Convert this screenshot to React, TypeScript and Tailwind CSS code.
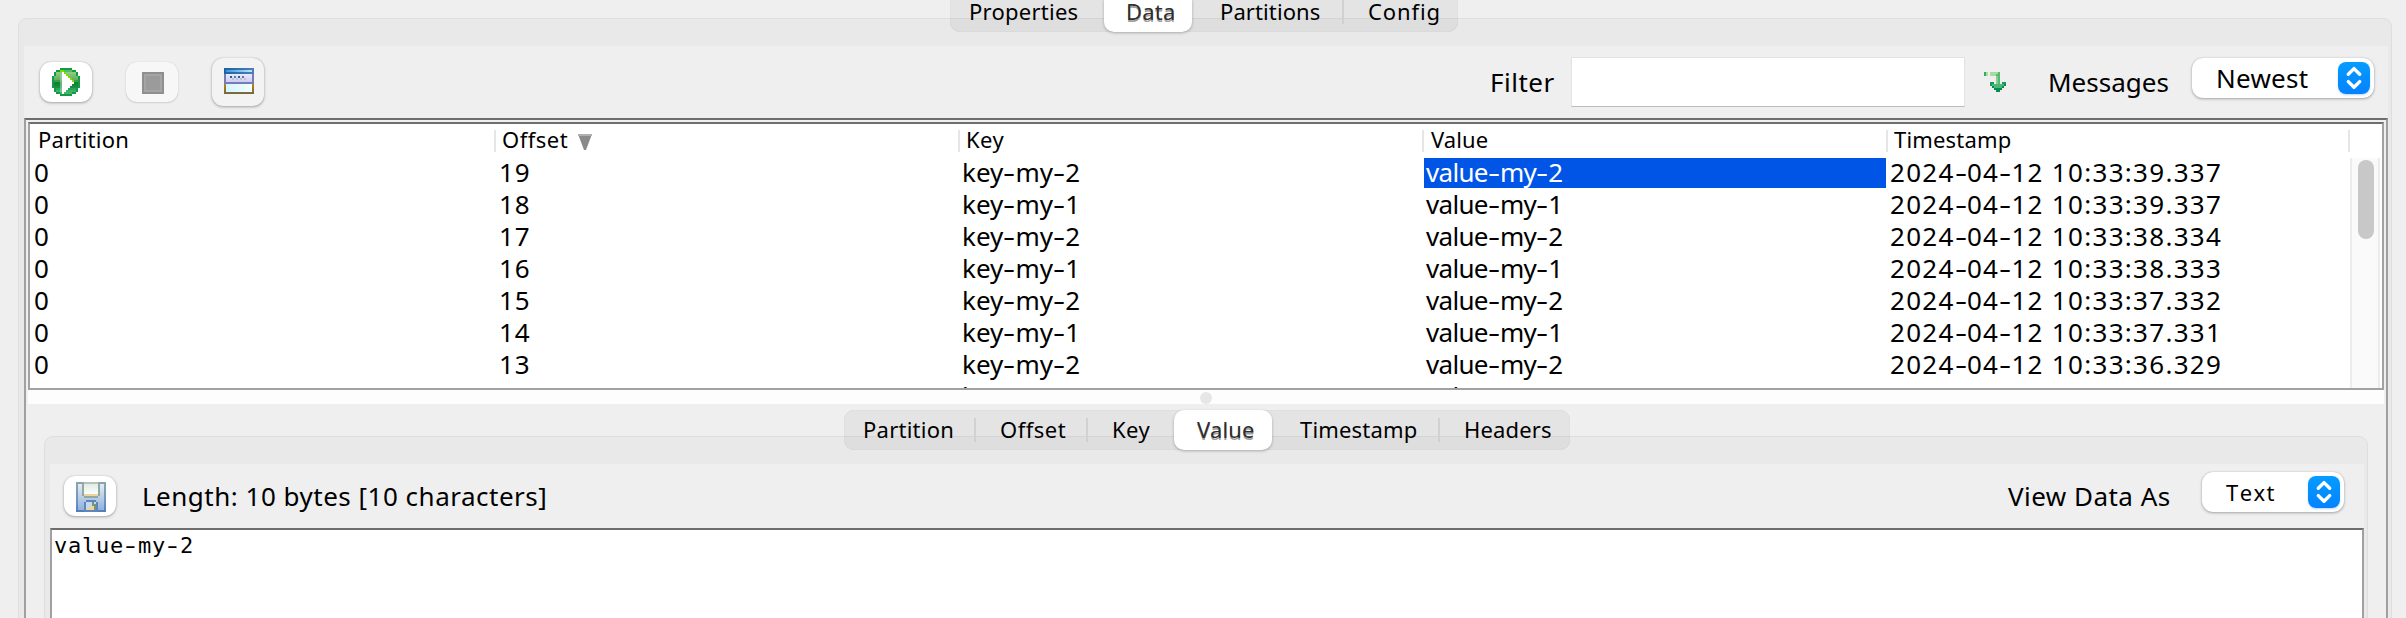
import type { ReactNode } from "react";

type Tab = { label: string; cls: string; active?: boolean; divider?: boolean };

const mainTabs: Tab[] = [
  { label: "Properties", cls: "w-[154px] pl-[19px] tracking-[0.25px]" },
  { label: "Data", cls: "w-[88px] pl-[22px] tracking-[0.2px]", active: true },
  { label: "Partitions", cls: "w-[152px] pl-[28px] tracking-[0.1px]", divider: true },
  { label: "Config", cls: "w-[114px] pl-[24px] tracking-[0.9px]" },
];

const detailTabs: Tab[] = [
  { label: "Partition", cls: "w-[132px] pl-[19px] tracking-[0.24px]", divider: true },
  { label: "Offset", cls: "w-[112px] pl-[24px] tracking-[0.5px]", divider: true },
  { label: "Key", cls: "w-[86px] pl-[24px] tracking-[0.4px]" },
  { label: "Value", cls: "w-[98px] pl-[23px] tracking-[0.16px]", active: true },
  { label: "Timestamp", cls: "w-[168px] pl-[28px] tracking-[0.18px]", divider: true },
  { label: "Headers", cls: "w-[130px] pl-[24px] tracking-[0.15px]" },
];

const messages = [
  { offset: "19", key: "key-my-2", value: "value-my-2", time: "2024-04-12 10:33:39.337" },
  { offset: "18", key: "key-my-1", value: "value-my-1", time: "2024-04-12 10:33:39.337" },
  { offset: "17", key: "key-my-2", value: "value-my-2", time: "2024-04-12 10:33:38.334" },
  { offset: "16", key: "key-my-1", value: "value-my-1", time: "2024-04-12 10:33:38.333" },
  { offset: "15", key: "key-my-2", value: "value-my-2", time: "2024-04-12 10:33:37.332" },
  { offset: "14", key: "key-my-1", value: "value-my-1", time: "2024-04-12 10:33:37.331" },
  { offset: "13", key: "key-my-2", value: "value-my-2", time: "2024-04-12 10:33:36.329" },
  { offset: "12", key: "key-my-1", value: "value-my-1", time: "2024-04-12 10:33:36.328" },
];

const grid = "grid grid-cols-[466px_464px_464px_464px_462px]";

/** Text whose hyphens are drawn wide, as in the system UI face. */
function Dashed({ text, dash = "w-[12.2px] origin-left" }: { text: string; dash?: string }) {
  return (
    <>
      {text.split(/(-)/).map((part, i) =>
        part === "-" ? (
          <span key={i} className={`inline-block scale-x-[1.45] ${dash}`}>
            -
          </span>
        ) : (
          <span key={i}>{part}</span>
        ),
      )}
    </>
  );
}

function TabBar({ tabs, className = "" }: { tabs: Tab[]; className?: string }) {
  return (
    <div className={`relative -mt-[27px] flex h-10 rounded-[10px] bg-black/[0.043] shadow-[inset_0_0_1px_rgba(0,0,0,0.18)] ${className}`}>
      {tabs.map((t) => (
        <div
          key={t.label}
          className={`${t.cls} flex h-10 items-center pb-[2px] text-[22px] leading-[30px] ${
            t.active
              ? "rounded-[10px] bg-white text-[#2e2e2e] shadow-[0_1px_3px_rgba(0,0,0,0.28)] [text-shadow:0_1.5px_0.5px_rgba(0,0,0,0.4)]"
              : ""
          }`}
        >
          {t.label}
          {t.divider && <span className="mt-[2px] ml-auto h-6 w-[2px] bg-[#d1d1d1]" />}
        </div>
      ))}
    </div>
  );
}

function IconButton({ className, children }: { className: string; children: ReactNode }) {
  return (
    <button className={`flex w-[52px] shrink-0 items-center justify-center rounded-[11px] ${className}`}>
      {children}
    </button>
  );
}

const raised = "shadow-[0_0_1px_rgba(0,0,0,0.25),0_1px_3px_rgba(0,0,0,0.3)]";

function Select({ label, className }: { label: string; className: string }) {
  return (
    <div className={`flex h-10 shrink-0 items-center rounded-[11px] bg-white pr-1 leading-10 ${raised} ${className}`}>
      {label}
      <span className="ml-auto flex size-8 items-center justify-center rounded-[8px] bg-linear-to-b from-[#069cff] to-[#0682ff] shadow-[0_1px_2px_rgba(0,120,255,0.3)]">
        <svg width="32" height="32" viewBox="0 0 32 32" fill="none" stroke="#fff" strokeWidth="3.4" strokeLinecap="round" strokeLinejoin="round">
          <path d="M10.3 12.2L16 6.6L21.7 12.2M10.3 19.6L16 25.2L21.7 19.6" />
        </svg>
      </span>
    </div>
  );
}

const discInsets = [4, 2, 1, 1, 0, 0, 0, 0, 0, 0, 1, 1, 2, 4];
const discShades = ["#55b96a", "#8ccb7c", "#80c078", "#74b96c", "#68b060", "#3f9c48", "#07872f", "#0c8a34", "#188f40", "#2aa455", "#40b068", "#45b56c"];

function PlayIcon() {
  return (
    <svg width="28" height="28" viewBox="0 0 14 14" shapeRendering="crispEdges">
      {discInsets.map((n, y) => (
        <rect key={y} x={n} y={y} width={14 - 2 * n} height="1" fill="#129a48" />
      ))}
      {discShades.map((c, y) => {
        const inset = Math.max(discInsets[y + 1] + 1, y === 0 || y === 11 ? 4 : 1);
        return <rect key={y} x={inset} y={y + 1} width={14 - 2 * inset} height="1" fill={c} />;
      })}
      <path d="M4 1h2v1h1v1h1v1h1v1h1v1h1v1h-6v-5h-1z" fill="#7ddc00" />
      <path d="M5 2h1v1h1v1h1v1h1v1h1v1h1v1h-1v1h-1v1h-1v1h-1v1h-1v1h-1z" fill="#fff" />
      <rect x="4" y="3" width="1" height="9" fill="#a9d3ae" opacity="0.6" />
    </svg>
  );
}

function StopIcon() {
  return (
    <svg width="22" height="22" viewBox="0 0 11 11" shapeRendering="crispEdges">
      <path d="M0 0h11v11h-11z" fill="#8f8f8f" />
      <path d="M1 1h9v9h-9z" fill="#a5a5a5" />
      <path d="M2 2h7v7h-7z" fill="#9b9b9b" />
    </svg>
  );
}

function WindowIcon() {
  return (
    <svg width="30" height="26" viewBox="0 0 15 13" shapeRendering="crispEdges">
      <defs>
        <linearGradient id="wt">
          <stop offset="0" stopColor="#2e9ad8" />
          <stop offset="1" stopColor="#c6e2f8" />
        </linearGradient>
        <linearGradient id="wf">
          <stop offset="0" stopColor="#1e62a2" />
          <stop offset="1" stopColor="#4a80bc" />
        </linearGradient>
        <linearGradient id="wl" x2="0" y2="1">
          <stop offset="0" stopColor="#e8ebfa" />
          <stop offset="1" stopColor="#cccdf2" />
        </linearGradient>
        <linearGradient id="wb">
          <stop offset="0" stopColor="#d2f6ff" />
          <stop offset="1" stopColor="#f4feff" />
        </linearGradient>
        <linearGradient id="wo" x2="0" y2="1">
          <stop offset="0" stopColor="#b8831c" />
          <stop offset="1" stopColor="#75683f" />
        </linearGradient>
      </defs>
      <path d="M0 0h15v3h-15z" fill="url(#wf)" />
      <path d="M1 1h13v1h-13z" fill="url(#wt)" />
      <path d="M0 3h15v5h-15z" fill="#777cb4" />
      <path d="M1 3h13v4h-13z" fill="url(#wl)" />
      <path d="M3 4h1v1h-1zM7 4h1v1h-1z" fill="#1c62a4" />
      <path d="M5 4h1v1h-1zM9 4h1v1h-1z" fill="#6478a8" />
      <path d="M4 5h1v1h-1zM6 5h1v1h-1zM8 5h1v1h-1zM10 5h1v1h-1z" fill="#c0c2d4" />
      <path d="M0 8h15v5h-15z" fill="url(#wo)" />
      <path d="M1 8h13v4h-13z" fill="url(#wb)" />
    </svg>
  );
}

function SaveIcon() {
  return (
    <svg width="30" height="30" viewBox="0 0 15 15" shapeRendering="crispEdges">
      <defs>
        <linearGradient id="so" x2="0" y2="1">
          <stop offset="0" stopColor="#8aa6ac" />
          <stop offset="0.6" stopColor="#6e96c4" />
          <stop offset="1" stopColor="#4f7fbc" />
        </linearGradient>
        <linearGradient id="sf" x2="0" y2="1">
          <stop offset="0" stopColor="#e4ecf0" />
          <stop offset="1" stopColor="#92b0dc" />
        </linearGradient>
        <linearGradient id="sl" x2="0" y2="1">
          <stop offset="0" stopColor="#dce8e0" />
          <stop offset="1" stopColor="#fafdff" />
        </linearGradient>
      </defs>
      <path d="M0 0h15v15h-15z" fill="url(#so)" />
      <path d="M1 1h13v13h-13z" fill="url(#sf)" />
      <path d="M3 0h9v7h-1v1h-7v-1h-1z" fill="#93a8a2" />
      <path d="M4 0h7v6h-7z" fill="url(#sl)" />
      <path d="M4 0h7v1h-7z" fill="#b4c4bc" />
      <path d="M4 6h7v1h-7z" fill="#ecd49a" />
      <path d="M5 9h5v1h1v5h-7v-5h1z" fill="#5c86be" />
      <path d="M5 10h5v4h-5z" fill="#c4d8f2" />
      <path d="M8 10h1v1h1v3h-1v-2h-1z" fill="#7d9278" />
      <path d="M7 12h2v2h-2zM5 13h2v1h-2z" fill="#ecd49a" />
    </svg>
  );
}

function ArrowIcon() {
  return (
    <svg className="mt-[26px] ml-[19px] shrink-0" width="22" height="20" viewBox="0 0 11 10" shapeRendering="crispEdges">
      <path d="M0 0h1v2h-1z" fill="#2fae62" />
      <path d="M1 0h1v2h-1zM3 0h4v1h-4zM3 1h3v1h-3z" fill="#a6dc9c" />
      <path d="M7 0h1v6h-1zM6 1h1v1h-1z" fill="#58b878" />
      <path d="M6 2h1v4h-1z" fill="#86d08c" />
      <path d="M3 5h2v1h-2zM3 6h1v1h-1zM9 5h2v1h-2z" fill="#1a9a5c" />
      <path d="M4 6h6v1h-6zM5 7h4v1h-4z" fill="#4cb878" />
      <path d="M10 6h1v1h-1zM4 7h1v1h-1zM9 7h1v1h-1zM5 8h4v1h-4zM6 9h2v1h-2z" fill="#058a52" />
    </svg>
  );
}

function HeaderCell({ children, className }: { children: ReactNode; className: string }) {
  return (
    <div className={`flex text-[22px] leading-[30px] ${className}`}>
      {children}
      <span className="mt-[6px] ml-auto h-[22px] w-[2px] bg-[#e6e6e6]" />
    </div>
  );
}

function MessageTable() {
  return (
    <div className="h-[268px] overflow-hidden border-2 border-[#a2a2a2] border-t-[#6e6e6e] bg-white">
      <div className={`${grid} h-[34px]`}>
        <HeaderCell className="pl-[8px] tracking-[0.24px]">Partition</HeaderCell>
        <HeaderCell className="pl-[6px] tracking-[0.5px]">
          Offset
          <svg className="mt-[10px] ml-[10px]" width="14" height="16" viewBox="0 0 14 16">
            <path d="M0 0H14L8 16H6Z" fill="#8a8a8a" />
            <path d="M0 0H14V2H0Z" fill="#b0b0b0" />
          </svg>
        </HeaderCell>
        <HeaderCell className="pl-[6px] tracking-[0.4px]">Key</HeaderCell>
        <HeaderCell className="pl-[7px] tracking-[0.1px]">Value</HeaderCell>
        <HeaderCell className="pl-[6px] tracking-[0.18px]">Timestamp</HeaderCell>
      </div>
      <div className="flex h-[230px]">
        <div className="w-[2320px]">
          {messages.map((m, i) => (
            <div key={m.offset} className={`${grid} h-8 text-[26px] leading-[28px] whitespace-nowrap`}>
              <div className="pl-[4px]">0</div>
              <div className="pl-[3px] tracking-[1px]">{m.offset}</div>
              <div className="pl-[2px]">
                <Dashed text={m.key} />
              </div>
              <div className={`mr-[2px] h-[30px] pl-[2px] tracking-[-0.7px] ${i === 0 ? "bg-[#0054e6] text-white" : ""}`}>
                <Dashed text={m.value} />
              </div>
              <div className="pl-[2px] tracking-[1.3px]">
                <Dashed text={m.time} />
              </div>
            </div>
          ))}
        </div>
        <div className="w-[30px] border-x-2 border-[#ececec] bg-[#fafafa] pt-[2px] pl-[6px]">
          <div className="h-[79px] w-4 rounded-full bg-[#c8c8c8]" />
        </div>
      </div>
    </div>
  );
}

export default function App() {
  return (
    <div className="h-[618px] w-[2406px] overflow-hidden bg-[#efefef] pt-[18px] pl-[18px] font-['Noto_Sans','Liberation_Sans',sans-serif] text-black">
      <div className="flex h-[620px] w-[2374px] flex-col rounded-[9px] border border-[#dedede] bg-[#e9e9e9] pr-[3px] pl-[5px]">
        <div className="flex h-[27px] shrink-0 justify-center">
          <TabBar tabs={mainTabs} className="mr-[4px]" />
        </div>
        <div className="flex h-[72px] shrink-0 items-start bg-[#efefef] pr-[14px] pl-4">
          <IconButton className={`mt-4 h-10 bg-white ${raised}`}>
            <PlayIcon />
          </IconButton>
          <IconButton className="mt-4 ml-[34px] h-10 bg-[#f7f7f7] pt-[2px] pl-[2px] shadow-[0_0_1px_rgba(0,0,0,0.18),0_1px_2px_rgba(0,0,0,0.12)]">
            <StopIcon />
          </IconButton>
          <IconButton className={`mt-3 ml-[34px] h-12 bg-[#f3f3f3] pb-[2px] pl-[2px] ${raised}`}>
            <WindowIcon />
          </IconButton>
          <span className="mt-[18px] ml-auto w-[81px] text-[26px] leading-9 tracking-[0.5px]">Filter</span>
          <div className="mt-[11px] h-[50px] w-[394px] border border-[#e2e2e2] border-b-[#bcbcbc] bg-white" />
          <ArrowIcon />
          <span className="mt-[18px] ml-[42px] w-[144px] text-[26px] leading-9">Messages</span>
          <Select label="Newest" className="mt-3 w-[182px] pl-[24px] text-[26px] tracking-[0.25px]" />
        </div>
        <div className="flex grow flex-col border-2 border-[#a0a0a0] border-t-[#6e6e6e] bg-[#efefef]">
          <div className="px-[2px] pt-[2px]">
            <MessageTable />
            <div className="flex h-[14px] items-center justify-center bg-[#fdfdfd]">
              <span className="mt-[2px] size-3 rounded-full bg-[#e6e6e6]" />
            </div>
          </div>
          <div className="mt-8 mr-[18px] ml-[18px] flex grow flex-col rounded-t-[9px] border border-[#dedede] bg-[#e9e9e9] pr-[3px] pl-[5px]">
            <div className="flex h-[27px] shrink-0 justify-center">
              <TabBar tabs={detailTabs} />
            </div>
            <div className="flex h-16 shrink-0 items-start bg-[#efefef] pr-5 pl-[14px]">
              <IconButton className={`mt-3 h-10 bg-white pt-[2px] pl-[2px] ${raised}`}>
                <SaveIcon />
              </IconButton>
              <span className="mt-[14px] ml-[26px] text-[26px] leading-9 tracking-[0.5px]">Length: 10 bytes [10 characters]</span>
              <span className="mt-[14px] ml-auto w-[194px] text-[26px] leading-9 tracking-[0.47px]">View Data As</span>
              <Select label="Text" className="mt-2 w-[142px] pl-[24px] text-[22px] tracking-[1.4px] [font-kerning:none]" />
            </div>
            <div className="grow border-x-2 border-t-2 border-x-[#a0a0a0] border-t-[#6e6e6e] bg-white pt-[3px] pl-[2px] font-['DejaVu_Sans_Mono','Liberation_Mono',monospace] text-[22px] leading-[26px] tracking-[0.75px]">
              <Dashed text="value-my-2" dash="origin-center" />
            </div>
          </div>
        </div>
      </div>
    </div>
  );
}
